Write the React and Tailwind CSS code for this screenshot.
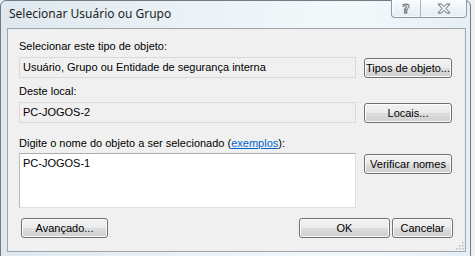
import React from 'react';

const ui = { fontFamily: '"Liberation Sans", Arial, sans-serif' };
const title = { fontFamily: '"Noto Sans", "Open Sans", sans-serif' };

function Btn({ children, className = '' }) {
  return (
    <div
      className={`h-[20px] flex items-center justify-center rounded-[3px] border border-[#707070] text-[11px] text-black bg-[linear-gradient(#f2f2f2_0%,#ebebeb_50%,#dddddd_50%,#cfcfcf_100%)] shadow-[inset_0_0_0_1px_#fcfcfc] ${className}`}
    >
      {children}
    </div>
  );
}

export default function App() {
  return (
    <div className="w-[475px] h-[256px] flex bg-[#eef0f2] overflow-hidden" style={ui}>
      {/* window */}
      <div className="w-[471px] h-[262px] flex flex-col rounded-tl-[6px] rounded-tr-[6px] border border-[#6f7c88] bg-[linear-gradient(90deg,#dfe8ee_0%,#eaf2f6_40%,#f3f9fb_75%,#e6eff4_100%)] pl-[6px] pr-[4px]">
        {/* title bar */}
        <div className="h-[27px] flex items-start relative">
          <span className="text-[12px] leading-none text-[#1e1e1e] mt-[7px] ml-[2px]" style={title}>
            Selecionar Usuário ou Grupo
          </span>
          <div className="absolute right-[-1px] top-[-1px] flex h-[18px] border border-t-0 border-[#8d9aa6] rounded-b-[4px] bg-[linear-gradient(#f7fbfd,#e4eef3)] shadow-[inset_0_0_0_1px_#ffffffaa]">
            <div className="w-[29px] flex items-center justify-center border-r border-[#a9b5bf]">
              <span
                className="text-[13px] font-bold leading-none text-transparent [-webkit-text-stroke:0.8px_#5a5f66]"
                style={{ fontFamily: '"DejaVu Sans", sans-serif' }}
              >
                ?
              </span>
            </div>
            <div className="w-[45px] flex items-center justify-center">
              <svg width="14" height="11" viewBox="0 0 14 11">
                <path
                  d="M1 1H4.5L7 3.7L9.5 1H13L9 5.5L13 10H9.5L7 7.3L4.5 10H1L5 5.5Z"
                  fill="#eef3f6"
                  stroke="#5a5f66"
                  strokeWidth="0.9"
                  strokeLinejoin="round"
                />
              </svg>
            </div>
          </div>
        </div>

        {/* client area */}
        <div className="w-[459px] h-[224px] border border-[#9ba6b0] bg-[#f0f0f0] pt-[11px] pl-[11px] pr-[12px] relative">
          <div className="h-[13px] leading-[13px] text-[11px] text-black">Selecionar este tipo de objeto:</div>
          <div className="mt-[4px] flex gap-[8px]">
            <div className="w-[337px] h-[21px] border border-[#d9d9d9] bg-[#f0f0f0] flex items-center pl-[3px] text-[11px] text-black">
              Usuário, Grupo ou Entidade de segurança interna
            </div>
            <Btn className="w-[88px] mt-[1px]">Tipos de objeto...</Btn>
          </div>

          <div className="mt-[7px] h-[13px] leading-[13px] text-[11px] text-black">Deste local:</div>
          <div className="mt-[4px] flex gap-[8px]">
            <div className="w-[337px] h-[21px] border border-[#d9d9d9] bg-[#f0f0f0] flex items-center pl-[3px] text-[11px] text-black">
              PC-JOGOS-2
            </div>
            <Btn className="w-[88px] mt-[1px]">Locais...</Btn>
          </div>

          <div className="mt-[14px] h-[13px] leading-[13px] text-[11px] text-black">
            Digite o nome do objeto a ser selecionado (
            <span className="text-[#0066cc] underline">exemplos</span>):
          </div>
          <div className="mt-[3px] flex gap-[8px]">
            <div className="w-[337px] h-[55px] border border-[#dbdfe6] border-t-[#abadb3] border-l-[#b5b8bf] bg-white pl-[3px] pt-[3px] text-[11px] leading-[13px] text-black">
              PC-JOGOS-1
            </div>
            <Btn className="w-[88px] mt-[1px]">Verificar nomes</Btn>
          </div>

          <div className="mt-[10px] flex items-center">
            <Btn className="w-[87px] ml-[2px]">Avançado...</Btn>
            <div className="flex-1" />
            <Btn className="w-[91px]">OK</Btn>
            <Btn className="w-[60px] ml-[3px] hidden">x</Btn>
            <Btn className="w-[61px] ml-[2px]">Cancelar</Btn>
          </div>

          <svg className="absolute right-[1px] bottom-[1px]" width="10" height="10" viewBox="0 0 10 10">
            {[[8, 2], [8, 5], [5, 5], [8, 8], [5, 8], [2, 8]].map(([x, y], i) => (
              <rect key={i} x={x} y={y} width="1.5" height="1.5" fill="#b8bcc0" />
            ))}
          </svg>
        </div>
      </div>
    </div>
  );
}
